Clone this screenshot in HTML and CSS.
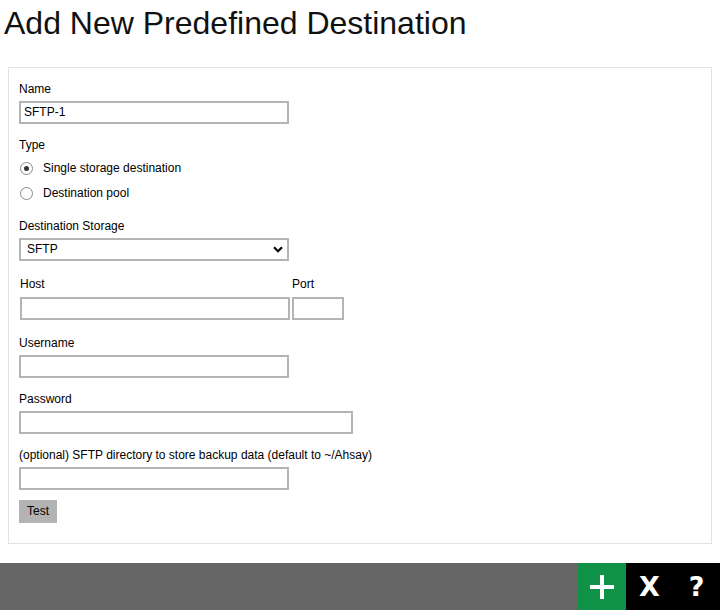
FILE: index.html
```html
<!DOCTYPE html>
<html>
<head>
<meta charset="utf-8">
<title>Add New Predefined Destination</title>
<link rel="stylesheet" href="styles.css">
</head>
<body>
<div class="page">
  <h1 class="title">Add New Predefined Destination</h1>
  <div class="panel">
    <div class="field">
      <label class="label">Name</label>
      <div class="input w270"><span class="value">SFTP-1</span></div>
    </div>
    <div class="field type-field">
      <label class="label">Type</label>
      <div class="radios">
        <div class="radio-row"><span class="radio checked"></span><span class="radio-text">Single storage destination</span></div>
        <div class="radio-row"><span class="radio"></span><span class="radio-text">Destination pool</span></div>
      </div>
    </div>
    <div class="field">
      <label class="label">Destination Storage</label>
      <div class="input w270 select">
        <span class="value sel-value">SFTP</span>
        <svg class="chev" width="10" height="7" viewBox="0 0 10 7"><path d="M1 1.2 L5 5.2 L9 1.2" fill="none" stroke="#000" stroke-width="2.2"/></svg>
      </div>
    </div>
    <div class="field host-row">
      <div class="host-col">
        <label class="label">Host</label>
        <div class="input w270"></div>
      </div>
      <div class="port-col">
        <label class="label">Port</label>
        <div class="input w52"></div>
      </div>
    </div>
    <div class="field">
      <label class="label">Username</label>
      <div class="input w270"></div>
    </div>
    <div class="field">
      <label class="label">Password</label>
      <div class="input w334"></div>
    </div>
    <div class="field last">
      <label class="label">(optional) SFTP directory to store backup data (default to ~/Ahsay)</label>
      <div class="input w270"></div>
    </div>
    <div class="btn-test">Test</div>
  </div>
  <div class="footer">
    <div class="fbtn add">
      <svg width="24" height="24" viewBox="0 0 24 24"><rect x="10" y="0" width="4" height="24" fill="#fff"/><rect x="0" y="10" width="24" height="4" fill="#fff"/></svg>
    </div>
    <div class="fbtn dark">X</div>
    <div class="fbtn dark">?</div>
  </div>
</div>
</body>
</html>
```

FILE: styles.css
```css
html, body {
  margin: 0;
  padding: 0;
  background: #fff;
}
body {
  font-family: "Liberation Sans", Arial, sans-serif;
  font-size: 12px;
  color: #000;
}
.page {
  width: 720px;
  height: 610px;
  display: flex;
  flex-direction: column;
}
.title {
  margin: 5px 0 0 4px;
  font-size: 32px;
  font-weight: 400;
  line-height: 37px;
  color: #111;
}
.panel {
  margin: 25px 8px 0 8px;
  border: 1px solid #e2e2e2;
  padding: 14px 10px 20px 10px;
  display: flex;
  flex-direction: column;
  align-items: flex-start;
}
.field {
  display: flex;
  flex-direction: column;
  align-items: flex-start;
  margin-bottom: 14px;
}
.field.type-field {
  margin-bottom: 15px;
}
.field.last {
  margin-bottom: 10px;
}
.label {
  display: block;
  line-height: 15px;
  margin-bottom: 4px;
}
.input {
  box-sizing: border-box;
  height: 23px;
  border: 2px solid #b4b4b4;
  background: #fff;
  display: flex;
  align-items: center;
  padding: 0 3px;
}
.w270 { width: 270px; }
.w334 { width: 334px; }
.w52 { width: 52px; }
.value {
  font-size: 12px;
  line-height: 15px;
}
.select {
  justify-content: space-between;
  padding: 0 4px 0 6px;
}
.chev {
  display: block;
}
.radios {
  display: flex;
  flex-direction: column;
  gap: 3px;
}
.radio-row {
  height: 22px;
  display: flex;
  align-items: center;
}
.radio {
  box-sizing: border-box;
  width: 13px;
  height: 13px;
  border: 1px solid #8a8a8a;
  border-radius: 50%;
  margin-left: 1px;
  margin-right: 10px;
  display: flex;
  align-items: center;
  justify-content: center;
  background: #fff;
}
.radio.checked::after {
  content: "";
  width: 5px;
  height: 5px;
  border-radius: 50%;
  background: #333;
}
.radio-text {
  line-height: 15px;
}
.host-row {
  flex-direction: row;
  gap: 2px;
  margin-left: 1px;
  margin-bottom: 16px;
}
.host-row .label {
  margin-top: 2px;
  margin-bottom: 5px;
}
.host-col, .port-col {
  display: flex;
  flex-direction: column;
}
.btn-test {
  width: 38px;
  height: 23px;
  background: #b3b3b3;
  display: flex;
  align-items: center;
  justify-content: center;
  line-height: 15px;
}
.footer {
  margin-top: 19px;
  height: 47px;
  background: #666;
  display: flex;
  justify-content: flex-end;
}
.fbtn {
  width: 47px;
  height: 47px;
  display: flex;
  align-items: center;
  justify-content: center;
  color: #fff;
  font-family: "DejaVu Sans", sans-serif;
  font-weight: 700;
  font-size: 27px;
}
.fbtn.add {
  width: 48px;
  background: #0f9147;
}
.fbtn.dark {
  background: #000;
}
```
